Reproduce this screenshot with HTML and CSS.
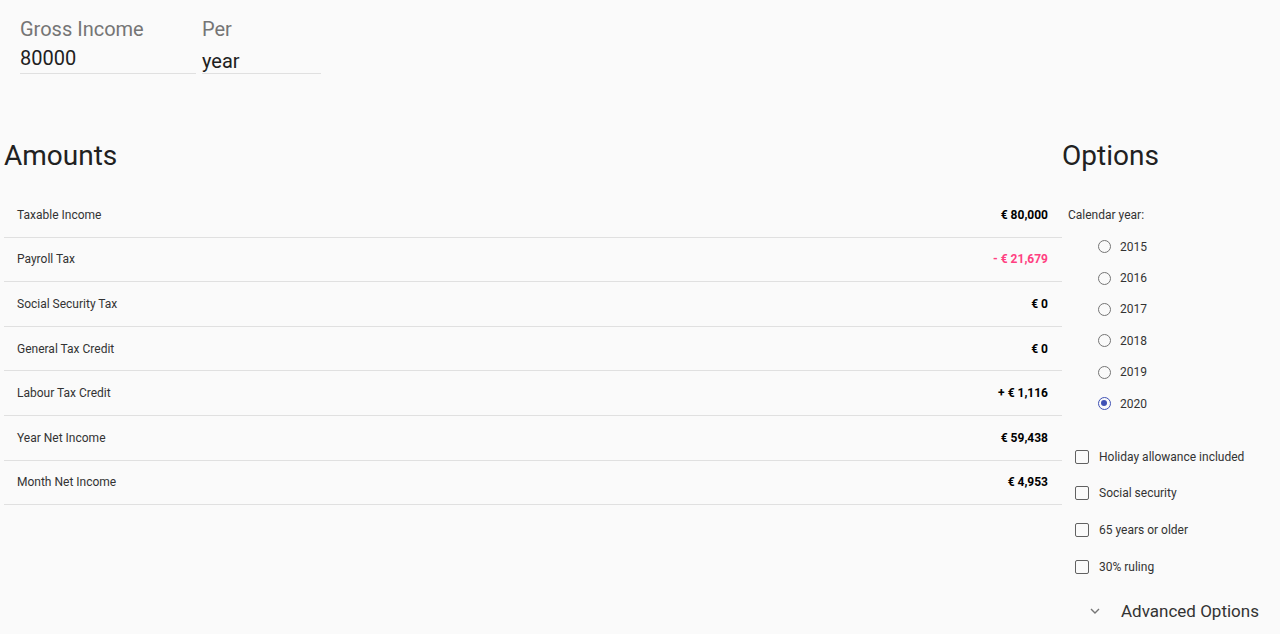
FILE: index.html
```html
<!DOCTYPE html>
<html>
    <head>
        <meta charset="utf-8" />
        <title>Dutch Tax Calculator</title>
        <link rel="stylesheet" href="styles.css">
    </head>
    <body>
        <div class="inputs">
            <div class="field income">
                <label class="label">Gross Income</label>
                <div class="value">80000</div>
            </div>
            <div class="field per">
                <label class="label">Per</label>
                <div class="value">year</div>
            </div>
        </div>

        <div class="main">
            <div class="amounts">
                <h2>Amounts</h2>
                <div class="row"><span>Taxable Income</span><b>€ 80,000</b></div>
                <div class="row"><span>Payroll Tax</span><b class="neg">- € 21,679</b></div>
                <div class="row"><span>Social Security Tax</span><b>€ 0</b></div>
                <div class="row"><span>General Tax Credit</span><b>€ 0</b></div>
                <div class="row"><span>Labour Tax Credit</span><b>+ € 1,116</b></div>
                <div class="row"><span>Year Net Income</span><b>€ 59,438</b></div>
                <div class="row"><span>Month Net Income</span><b>€ 4,953</b></div>
            </div>

            <div class="options">
                <h2>Options</h2>
                <div class="caption">Calendar year:</div>
                <div class="radios">
                    <div class="radio"><i class="circle"></i>2015</div>
                    <div class="radio"><i class="circle"></i>2016</div>
                    <div class="radio"><i class="circle"></i>2017</div>
                    <div class="radio"><i class="circle"></i>2018</div>
                    <div class="radio"><i class="circle"></i>2019</div>
                    <div class="radio checked"><i class="circle"></i>2020</div>
                </div>
                <div class="checks">
                    <div class="check"><i class="box"></i>Holiday allowance included</div>
                    <div class="check"><i class="box"></i>Social security</div>
                    <div class="check"><i class="box"></i>65 years or older</div>
                    <div class="check"><i class="box"></i>30% ruling</div>
                </div>
                <div class="advanced">
                    <svg width="14" height="14" viewBox="0 0 14 14"><path d="M3 5 L7 9 L11 5" fill="none" stroke="#757575" stroke-width="1.4"/></svg>
                    <span>Advanced Options</span>
                </div>
            </div>
        </div>
    </body>
</html>
```

FILE: styles.css
```css
*
{
    box-sizing: border-box;
}

body
{
    font-family: Roboto, "Liberation Sans", sans-serif;
    background: #fafafa;
    color: rgba(0,0,0,0.87);
    margin: 0;
    height: 100%;
    overflow: hidden;
}

.inputs
{
    display: flex;
    gap: 6px;
    padding: 17px 0 0 20px;
}

.field
{
    display: flex;
    flex-direction: column;
    border-bottom: 1px solid #e0e0e0;
    height: 57px;
}

.field.income
{
    width: 176px;
}

.field.per
{
    width: 119px;
}

.label
{
    font-size: 20px;
    line-height: 24px;
    color: #757575;
}

.value
{
    font-size: 20px;
    line-height: 24px;
    color: #212121;
    margin-top: 5px;
}

.per .value
{
    margin-top: 8px;
}

.main
{
    display: flex;
    padding: 0 0 0 4px;
    margin-top: 66px;
}

h2
{
    font-size: 28px;
    font-weight: 400;
    line-height: 32px;
    margin: 0 0 21px 0;
    color: #212121;
}

.amounts
{
    flex: 1;
}

.row
{
    display: flex;
    justify-content: space-between;
    align-items: center;
    height: 44.6px;
    padding: 0 14px 0 13px;
    border-bottom: 1px solid #e0e0e0;
    font-size: 12px;
    color: #333;
}

.row b
{
    font-weight: 700;
    color: #000;
}

.row b.neg
{
    color: #ff4081;
}

.options
{
    width: 218px;
}

.caption
{
    font-size: 12px;
    padding-left: 6px;
    height: 44px;
    line-height: 44px;
    color: #333;
}

.radios
{
    padding-left: 36px;
    margin-top: -6px;
}

.radio
{
    display: flex;
    align-items: center;
    height: 31.4px;
    font-size: 12px;
    color: #333;
}

.circle
{
    width: 13px;
    height: 13px;
    border: 1.5px solid #757575;
    border-radius: 50%;
    margin-right: 9px;
    position: relative;
}

.radio.checked .circle
{
    border-color: #3f51b5;
}

.radio.checked .circle::after
{
    content: "";
    position: absolute;
    left: 2px;
    top: 2px;
    width: 6px;
    height: 6px;
    border-radius: 50%;
    background: #3f51b5;
}

.checks
{
    padding-left: 13px;
    margin-top: 19px;
}

.check
{
    display: flex;
    align-items: center;
    height: 36.7px;
    font-size: 12px;
    color: #333;
}

.box
{
    width: 14px;
    height: 14px;
    border: 1.5px solid #616161;
    border-radius: 2px;
    margin-right: 10px;
}

.advanced
{
    display: flex;
    align-items: center;
    padding-left: 26px;
    margin-top: 11px;
    height: 30px;
    font-size: 17px;
    color: #333;
}

.advanced svg
{
    margin-right: 19px;
}
```
